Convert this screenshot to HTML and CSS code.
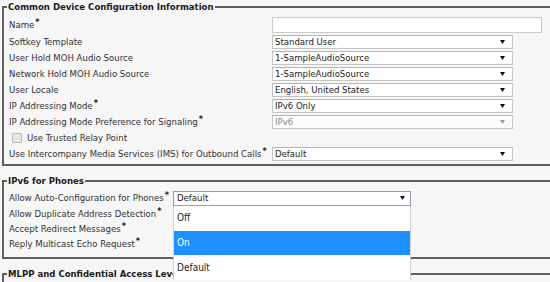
FILE: index.html
```html
<!DOCTYPE html>
<html>
<head>
<meta charset="utf-8">
<link rel="stylesheet" href="styles.css">
</head>
<body>
<div class="page">
  <fieldset class="group group-main">
    <legend>Common Device Configuration Information</legend>
    <div class="row row-name"><span class="label">Name<sup>*</sup></span><div class="textbox"></div></div>
    <div class="row"><span class="label">Softkey Template</span><div class="select"><span class="value">Standard User</span><svg class="arrow" viewBox="0 0 5 4"><path d="M0 0H5L2.5 4Z"/></svg></div></div>
    <div class="row"><span class="label">User Hold MOH Audio Source</span><div class="select"><span class="value">1-SampleAudioSource</span><svg class="arrow" viewBox="0 0 5 4"><path d="M0 0H5L2.5 4Z"/></svg></div></div>
    <div class="row"><span class="label">Network Hold MOH Audio Source</span><div class="select"><span class="value">1-SampleAudioSource</span><svg class="arrow" viewBox="0 0 5 4"><path d="M0 0H5L2.5 4Z"/></svg></div></div>
    <div class="row"><span class="label">User Locale</span><div class="select"><span class="value">English, United States</span><svg class="arrow" viewBox="0 0 5 4"><path d="M0 0H5L2.5 4Z"/></svg></div></div>
    <div class="row"><span class="label">IP Addressing Mode<sup>*</sup></span><div class="select"><span class="value">IPv6 Only</span><svg class="arrow" viewBox="0 0 5 4"><path d="M0 0H5L2.5 4Z"/></svg></div></div>
    <div class="row"><span class="label">IP Addressing Mode Preference for Signaling<sup>*</sup></span><div class="select disabled"><span class="value">IPv6</span><svg class="arrow" viewBox="0 0 5 4"><path d="M0 0H5L2.5 4Z"/></svg></div></div>
    <div class="row"><span class="check"><span class="box"></span>Use Trusted Relay Point</span></div>
    <div class="row"><span class="label">Use Intercompany Media Services (IMS) for Outbound Calls<sup>*</sup></span><div class="select"><span class="value">Default</span><svg class="arrow" viewBox="0 0 5 4"><path d="M0 0H5L2.5 4Z"/></svg></div></div>
  </fieldset>

  <fieldset class="group group-ipv6">
    <legend>IPv6 for Phones</legend>
    <div class="row row-first"><span class="label">Allow Auto-Configuration for Phones<sup>*</sup></span>
      <div class="select focused"><span class="value">Default</span><svg class="arrow" viewBox="0 0 5 4"><path d="M0 0H5L2.5 4Z"/></svg>
        <ul class="dropdown">
          <li>Off</li>
          <li class="active">On</li>
          <li>Default</li>
        </ul>
      </div>
    </div>
    <div class="row"><span class="label">Allow Duplicate Address Detection<sup>*</sup></span></div>
    <div class="row"><span class="label">Accept Redirect Messages<sup>*</sup></span></div>
    <div class="row"><span class="label">Reply Multicast Echo Request<sup>*</sup></span></div>
  </fieldset>

  <fieldset class="group group-mlpp">
    <legend><span class="legend-clip">MLPP and Confidential Access Level Information</span></legend>
  </fieldset>
</div>
</body>
</html>
```

FILE: styles.css
```css
html, body {
  margin: 0;
  padding: 0;
  background: #f6f6f6;
  overflow: hidden;
}

body {
  width: 550px;
  height: 282px;
  font-family: "DejaVu Sans Condensed", "DejaVu Sans", sans-serif;
  font-stretch: condensed;
  font-size: 9.5px;
  color: #333;
}

.page {
  width: 640px;
}

.group {
  margin: 0 0 0 2px;
  padding: 2px 0 2px 5px;
  border: 2px solid #5e5e5e;
  border-right: none;
  min-width: 0;
}

.group + .group {
  margin-top: 8px;
}

.group-ipv6 {
  padding-bottom: 6px;
}

.group-mlpp {
  height: 20px;
}

legend {
  font-weight: bold;
  color: #1a1a1a;
  line-height: 14px;
  padding: 0 1px;
  margin-left: -2px;
}

.legend-clip {
  display: block;
  width: 164px;
  overflow: hidden;
  white-space: nowrap;
}

.group-mlpp legend {
  padding-right: 0;
}

.row {
  display: grid;
  grid-template-columns: 263px auto;
  align-items: center;
  height: 16px;
  line-height: 16px;
}

.row-name {
  height: 18px;
}

.group-ipv6 .row {
  grid-template-columns: 164px auto;
  height: 15px;
}

.group-ipv6 .row-first {
  height: 16px;
}

.label {
  white-space: nowrap;
}

sup {
  font-weight: bold;
  font-size: 9px;
  line-height: 0;
  vertical-align: 3px;
  margin-left: 1px;
  color: #222;
}

.textbox {
  width: 268px;
  height: 14px;
  background: #fff;
  border: 1px solid #c9c9c9;
}

.select {
  position: relative;
  height: 12px;
  background: #fff;
  border: 1px solid #c4c4c4;
  border-top-color: #b3b3b3;
  display: flex;
  align-items: center;
  justify-content: space-between;
  padding: 0 7px 0 2px;
  box-sizing: content-box;
  width: 230px;
  line-height: 12px;
  color: #222;
}

.select .value {
  white-space: nowrap;
}

.arrow {
  width: 5px;
  height: 4px;
  fill: #111;
}

.select.disabled {
  background: #fbfbfb;
  color: #8a8a8a;
}

.select.disabled .arrow {
  fill: #9a9a9a;
}

.select.focused {
  border-color: #8e9db0;
  width: 228px;
  height: 13px;
  padding-left: 3px;
  padding-right: 5px;
}

.check {
  display: flex;
  align-items: center;
  white-space: nowrap;
  grid-column: 1 / 3;
  padding-left: 3px;
}

.check .box {
  width: 8px;
  height: 8px;
  border: 1px solid #b9b9b9;
  background: #e6e6e6;
  border-radius: 1px;
  margin-right: 5px;
}

.dropdown {
  position: absolute;
  top: 14px;
  left: -1px;
  width: 236px;
  margin: 0;
  padding: 0;
  list-style: none;
  background: #fff;
  border-left: 1px solid #d0d0d0;
  border-right: 1px solid #d0d0d0;
  z-index: 5;
  color: #222;
}

.dropdown li {
  height: 24px;
  line-height: 24px;
  padding-left: 3px;
  font-size: 10px;
}

.dropdown li + li {
  margin-top: 1px;
}

.dropdown li.active {
  background: #1e90ff;
  color: #fff;
}
```
